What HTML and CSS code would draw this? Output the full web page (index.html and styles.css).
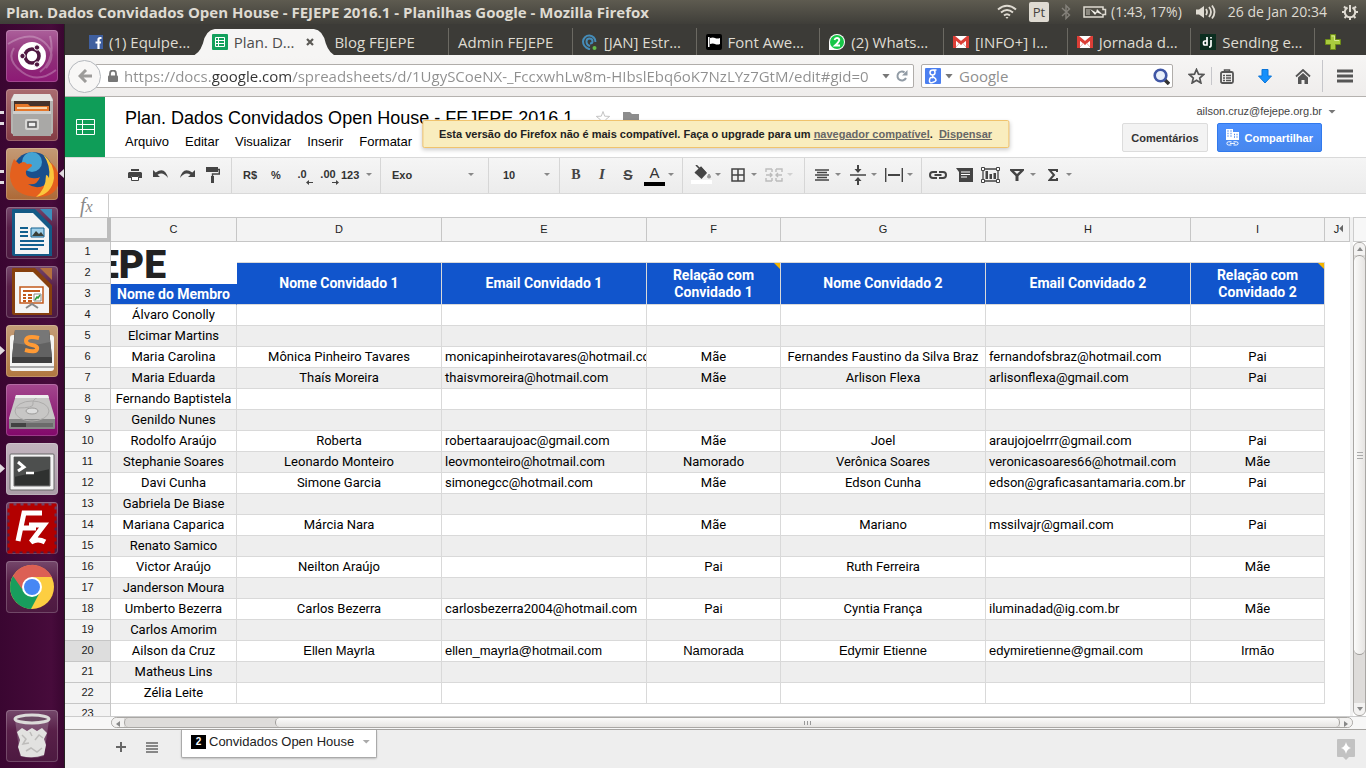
FILE: index.html
```html
<!DOCTYPE html>
<html lang="pt-BR">
<head>
<meta charset="utf-8">
<title>Plan. Dados Convidados Open House - FEJEPE 2016.1 - Planilhas Google</title>
<link rel="stylesheet" href="styles.css">
</head>
<body>
<header class="panel">
  <span class="panel-title">Plan. Dados Convidados Open House - FEJEPE 2016.1 - Planilhas Google - Mozilla Firefox</span>
  <div class="indicators">
    <svg width="20" height="16" viewBox="0 0 20 16" fill="none" stroke="#dfdbd2" stroke-width="2"><path d="M1 5.500Q10-2 19 5.500M4 8.500Q10 3.500 16 8.500M7 11.500Q10 9 13 11.500"/><path d="M8.500 13h3L10 15z" fill="#dfdbd2" stroke="none"/></svg>
    <span class="keyboard">Pt</span>
    <svg width="10" height="16" viewBox="0 0 10 16" fill="none" stroke="#85827b" stroke-width="1.400"><path d="M1 4l7.500 7L5 14.500V1.500L8.500 5 1 12"/></svg>
    <span class="indicator"><svg width="24" height="12" viewBox="0 0 24 12"><path d="M1 1h19v2.500h2.500v5H20V11H1z" fill="none" stroke="#dfdbd2" stroke-width="1.500"/><path d="M3 3h4v6H3z" fill="#8b887f"/><path d="M7 3l6 3.500L14 3l6 6-6-2.500L12 9z" fill="#f2efe8"/></svg>(1:43, 17%)</span>
    <svg width="20" height="16" viewBox="0 0 20 16" fill="none" stroke="#dfdbd2" stroke-width="1.800"><path d="M0 5.500h3L8 2v12l-5-3.500H0z" fill="#dfdbd2" stroke="none"/><path d="M10 5q2 3 0 6M13 3q4 5 0 10M16 1.500q5 6.500 0 13"/></svg>
    <span class="clock">26 de Jan 20:34</span>
    <svg width="16" height="16" viewBox="0 0 16 16" fill="none" stroke="#dfdbd2" stroke-width="2"><path d="M5.500 3.500a5.200 5.200 0 1 0 5 0M8 1v7"/><path d="M0 8h2.500M13.500 8H16M8 13.500V16M2 2.500L4 4.500M14 2.500l-2 2M2.500 14L4.500 12M13.500 14l-2-2"/></svg>
  </div>
</header>

<div class="desktop">
  <nav class="launcher" aria-label="Lançador">
    <button class="tile tile-dash" aria-label="Painel inicial"><svg viewBox="0 0 52 52"><g fill="none" stroke="#fff" stroke-opacity=".25" stroke-width="2"><path d="M2 14Q24 0 38 12T40 38M50 40Q32 54 16 42T8 18M44 6Q50 30 34 42"/></g><circle cx="26" cy="26" r="14" fill="#fff"/><circle cx="26" cy="26" r="7" fill="none" stroke="#4f1741" stroke-width="3.600"/><g fill="#4f1741" stroke="#fff"><circle cx="16.500" cy="26" r="2.700"/><circle cx="31" cy="17.500" r="2.700"/><circle cx="31" cy="34.500" r="2.700"/></g></svg></button>
    <button class="tile tile-files running" aria-label="Arquivos"><svg viewBox="0 0 52 52"><path d="M5 10L8 5h36l3 5v34l-4 3H9l-4-3z" fill="#b5b4b1"/><path d="M8 5h36l3 7H5z" fill="#e5e4e2"/><path d="M8 12h36v10H8z" fill="#46322c"/><path d="M9 15h13l2 2h19v5H9z" fill="#e5772a"/><path d="M11 18h30v2H11z" fill="#f9d6ad"/><path d="M7 22h38v25H7z" fill="#a9a8a6"/><path d="M7 22h38v3H7z" fill="#cfcecc"/><rect x="19" y="30" width="14" height="11" rx="2" fill="#d8d7d5"/><path d="M22 33h8v5h-8z" fill="#eee" stroke="#555" stroke-width="1.500"/></svg></button>
    <button class="tile tile-firefox running focused" aria-label="Firefox"><svg viewBox="0 0 52 52"><circle cx="27" cy="24" r="20" fill="#1a4f8c"/><circle cx="26" cy="14" r="10" fill="#4fb8e6" opacity=".8"/><path d="M8 11l5 5q5-4 8 0 5-1 5 2l-6 5q-1 6 6 7 5 1 8-1-3 9-12 7 8 6 17 1 9-7 5-23 8 6 9 16 0 18-20 19Q6 48 4 29q0-9 4-18z" fill="#e4601e"/><path d="M37 6q12 10 11 24-2 16-18 19 10-8 10-22 2 0 3 3 2-12-6-24z" fill="#fbc63c"/></svg></button>
    <button class="tile" aria-label="Writer"><svg viewBox="0 0 52 52"><path d="M6 3q0-1 1-1h22l17 17v30H8q-2 0-2-2z" fill="#145a86"/><path d="M9 6h18l16 16v25H9z" fill="#f4f4f4"/><path d="M34 2h12v12z" fill="#3d8fbc"/><path d="M14 21h8M14 25h8M14 29h8M14 34h24M14 38h24M14 42h18" stroke="#12608f" stroke-width="2"/><path d="M25 21h13v9H25z" fill="#9fd0ea" stroke="#12608f"/><path d="M26 29l4-5 3 3 2-2 3 4z" fill="#3a3f37"/></svg></button>
    <button class="tile" aria-label="Impress"><svg viewBox="0 0 52 52"><path d="M6 3q0-1 1-1h22l17 17v30H8q-2 0-2-2z" fill="#86400e"/><path d="M9 6h18l16 16v25H9z" fill="#f4f4f4"/><path d="M34 2h12v12z" fill="#b4703f"/><path d="M14 21h23v16H14z" fill="#fff" stroke="#c25a1c" stroke-width="1.500"/><path d="M17 25h17M17 29h3M22 29h4M17 32h3M22 32h4M17 35h3M22 35h4" stroke="#c25a1c" stroke-width="1.800"/><path d="M28 28h7v7h-7z" fill="#fff" stroke="#888"/><path d="M29 34l2-3 1 1 2-3" stroke="#2b9b3a" fill="none" stroke-width="1.500"/><path d="M20 42l6-4 6 4" fill="none" stroke="#888" stroke-width="2"/></svg></button>
    <button class="tile tile-sublime one" aria-label="Sublime Text"><svg viewBox="0 0 52 52"><rect x="4" y="10" width="44" height="36" rx="3" fill="#f4f4f2"/><path d="M4 41h44v2H4z" fill="#a9a9a9"/><path d="M9 5h34l3 28v5H6v-5z" fill="#3f3f3f"/><path d="M9 5h34l3 27H6z" fill="#626262"/><path d="M9 5h34l1 12Q26 22 8 18z" fill="#777"/><path d="M33 13q-13-3-13 3 0 3 6 4 6 1 5 4-1 4-12 1" fill="none" stroke="#ff9a35" stroke-width="4"/></svg></button>
    <button class="tile tile-disk" aria-label="Disco"><svg viewBox="0 0 52 52"><path d="M10 11h32l7 23v10H3V34z" fill="#c7c6c5"/><path d="M3 35h46v9q0 1-1 1H4q-1 0-1-1z" fill="#888"/><path d="M5 39h15v4H5z" fill="#424242"/><path d="M20 39h27v4H20z" fill="#6b6b6b"/><g fill="none" stroke="#9b9a99"><ellipse cx="26" cy="27" rx="17" ry="10" stroke="#adacab"/><ellipse cx="26" cy="27" rx="6" ry="3" fill="#ddd"/><path d="M32 13q-6 3-5 7T11 24" stroke="#adacab"/></g><path d="M10 11h32l1 3H9z" fill="#eee"/></svg></button>
    <button class="tile tile-terminal one" aria-label="Terminal"><svg viewBox="0 0 52 52"><rect x="4" y="11" width="44" height="36" rx="1" fill="#f3f3f3" stroke="#666"/><path d="M8 14h36v29H8z" fill="#2f3130" stroke="#777"/><path d="M8 14h36v12L8 34z" fill="#4d4f4e"/><path d="M12 19l6 5-6 4" fill="none" stroke="#fff" stroke-width="3"/><path d="M20 30h8" stroke="#fff" stroke-width="2.500"/></svg></button>
    <button class="tile" aria-label="FileZilla"><svg viewBox="0 0 52 52"><rect x="3.500" y="3.500" width="45" height="46" fill="#b30000" stroke="#b30000" stroke-width="4" stroke-dasharray="4 3"/><path d="M12 39L18 11h18M14 26h16M23 23h15L25 40q7-4 14 0" fill="none" stroke="#fff" stroke-width="5"/></svg></button>
    <button class="tile" aria-label="Chrome"><svg viewBox="0 0 52 52"><circle cx="26" cy="26" r="22" fill="#fdce41"/><path d="M7 15A22 22 0 0 0 25 48l9-17-8-5z" fill="#189d5d"/><path d="M7 15A22 22 0 0 1 46 16H26L16 28z" fill="#dc6054"/><circle cx="26" cy="26" r="10" fill="#fff"/><circle cx="26" cy="26" r="8" fill="#4687f4"/></svg></button>
    <button class="tile tile-trash" aria-label="Lixeira"><svg viewBox="0 0 52 52"><path d="M9 10l5 36q12 4 24 0l5-36z" fill="#d8d0d6" fill-opacity=".25"/><path d="M11 22l5-4 5 3 5-3 5 3 5-3 5 5-3 6 2 6-2 10q-11 4-23 1l-3-9 2-7z" fill="#e2e2e0"/><path d="M16 25l4 4-3 5 6-1M29 30l4-5 4 3M24 22l2 4M20 41l5-3 6 4 5-4" fill="none" stroke="#bdbcba" stroke-width="1.500"/><ellipse cx="26" cy="9" rx="17" ry="4" fill="#6b4a63" stroke="#dcdbd9" stroke-width="3"/></svg></button>
  </nav>

  <main class="browser">
    <div class="tabs" role="tablist">
      <button class="tab" role="tab"><svg width="14" height="14" viewBox="0 0 14 14"><path d="M0 0h14v14H0z" fill="#3f5f9f"/><path d="M12.500 3H11q-1.500 0-1.500 1.500V14M6.500 7.500h5.500" fill="none" stroke="#fff" stroke-width="2.200"/></svg>(1) Equipe…</button>
      <button class="tab active" role="tab" aria-selected="true"><svg class="tab-shape" viewBox="0 0 148 29" preserveAspectRatio="none"><path d="M0 29Q8 28 12 16 15 2 24 1H124Q133 2 136 16 140 28 148 29z" fill="#f6f5f4"/></svg><svg class="tab-icon" width="16" height="16" viewBox="0 0 16 16"><rect width="16" height="16" rx="1" fill="#12a05c"/><path d="M3.500 3.500h9v9h-9zM3 6.500h10M3 9.500h10M6.500 3v10" fill="none" stroke="#fff"/></svg><span class="tab-text">Plan. D…</span><svg class="tab-close" width="8" height="8" viewBox="0 0 8 8"><path d="M1 1l6 6M7 1L1 7" stroke="#5b5955" stroke-width="2.200"/></svg></button>
      <button class="tab" role="tab">Blog FEJEPE</button>
      <button class="tab" role="tab">Admin FEJEPE</button>
      <button class="tab" role="tab"><svg width="16" height="16" viewBox="0 0 16 16"><path d="M8 15.500Q1 13 1 7.500A6.200 6.200 0 0 1 13.400 8M8 12Q4.500 11 4.500 7.500a3 3 0 0 1 6 0q0 2-2.500 2" fill="none" stroke="#458cb8" stroke-width="2"/><circle cx="12.500" cy="14" r="2" fill="#63bb4a"/></svg>[JAN] Estr…</button>
      <button class="tab" role="tab"><svg width="16" height="16" viewBox="0 0 16 16"><rect width="16" height="16" rx="2" fill="#000"/><path d="M2 3h1.500v10H2zM4 4q3-1 5 0t5 0v6q-3 1-5 0t-5 0z" fill="#fff"/></svg>Font Awe…</button>
      <button class="tab" role="tab"><svg width="16" height="16" viewBox="0 0 16 16"><path d="M0 16V8a8 8 0 1 1 8 8z" fill="#fff"/><circle cx="8" cy="8" r="7" fill="#16c646"/><path d="M5.500 6q.5-2 2.500-2t2.300 2Q10 8 6 11.500h5" fill="none" stroke="#fff" stroke-width="1.800"/></svg>(2) Whats…</button>
      <button class="tab" role="tab"><svg width="16" height="12" viewBox="0 0 16 12"><path d="M0 0h16v12H0z" fill="#fff"/><path d="M1.500 12V1.500L8 7l6.500-5.500V12" fill="none" stroke="#dc3e36" stroke-width="3"/><path d="M3 11l3.500-4M13 11L9.500 7" stroke="#e9aaa6"/></svg>[INFO+] I…</button>
      <button class="tab" role="tab"><svg width="16" height="12" viewBox="0 0 16 12"><path d="M0 0h16v12H0z" fill="#fff"/><path d="M1.500 12V1.500L8 7l6.500-5.500V12" fill="none" stroke="#dc3e36" stroke-width="3"/><path d="M3 11l3.500-4M13 11L9.500 7" stroke="#e9aaa6"/></svg>Jornada d…</button>
      <button class="tab" role="tab"><svg width="16" height="16" viewBox="0 0 16 16"><path d="M0 0h16v16H0z" fill="#0c2e20"/><path d="M7 3v8H5q-1.500 0-1.500-2T5 7h2M11 6v5.500q0 1.500-2 1.500M11 3v1.500" fill="none" stroke="#fff" stroke-width="1.700"/></svg>Sending e…</button>
      <button class="new-tab" aria-label="Nova aba"><svg width="16" height="16" viewBox="0 0 16 16"><path d="M5.500.5h5v5h5v5h-5v5h-5v-5h-5v-5h5z" fill="#a9cb3e" stroke="#6d8b17"/><path d="M6.500 2h3v4.500H14" fill="none" stroke="#d7e994"/></svg></button>
    </div>

    <div class="navbar">
      <button class="back" aria-label="Voltar"><svg width="14" height="14" viewBox="0 0 14 14" fill="none" stroke="#9d9c9a" stroke-width="3"><path d="M8 1L2 7l6 6M2 7h12"/></svg></button>
      <div class="urlbar">
        <svg width="10" height="12" viewBox="0 0 10 12"><path d="M2 6V3.500a3 3 0 0 1 6 0V6" fill="none" stroke="#777" stroke-width="1.800"/><rect y="5.500" width="10" height="6.500" rx="1" fill="#777"/></svg>
        <input class="url" type="text" aria-label="Endereço" value="https://docs.google.com/spreadsheets/d/1UgySCoeNX-_FccxwhLw8m-HIbslEbq6oK7NzLYz7GtM/edit#gid=0">
        <span class="caret big"></span>
        <button class="plain" aria-label="Recarregar"><svg width="12" height="12" viewBox="0 0 12 12"><path d="M10 8A4.500 4.500 0 1 1 8.500 2.300" fill="none" stroke="#919ba5" stroke-width="2"/><path d="M11.500 0v5.500H6z" fill="#919ba5"/></svg></button>
      </div>
      <div class="searchbar">
        <svg width="16" height="16" viewBox="0 0 16 16"><rect width="16" height="16" rx="1" fill="#4b7ff0"/><path d="M11.500 2H8Q5 2 5 4.500T7.500 7 10 4.500 8 2M8 7.500Q7 8.500 9 9.500t2 2.500-3.500 2.500T4.500 12 8 9.800" fill="none" stroke="#fff" stroke-width="1.500"/></svg>
        <span class="caret big"></span>
        <input class="search" type="text" aria-label="Pesquisar" placeholder="Google">
        <button class="plain" aria-label="Buscar"><svg width="17" height="17" viewBox="0 0 17 17"><path d="M11 11l5 5" stroke="#333" stroke-width="3.500"/><circle cx="7.500" cy="7.500" r="5.800" fill="#e8effa" stroke="#3f56a5" stroke-width="2.600"/></svg></button>
      </div>
      <div class="nav-icons">
        <button class="plain" aria-label="Favoritar"><svg width="17" height="16" viewBox="0 0 17 16"><path d="M8.500 1.500l2 4.700 5 .4-3.800 3.400 1.200 5-4.400-2.700L4.100 15l1.200-5L1.500 6.600l5-.4z" fill="none" stroke="#555" stroke-width="1.700"/></svg></button>
        <i class="rule"></i>
        <button class="plain" aria-label="Lista de favoritos"><svg width="14" height="15" viewBox="0 0 14 15"><rect x="1" y="3" width="12" height="11" rx="1.500" fill="none" stroke="#555" stroke-width="1.800"/><path d="M4.500 2.500V1h5v1.500M3 6.500h2M6 6.500h5M3 9h2M6 9h5M3 11.500h2M6 11.500h5" fill="none" stroke="#555" stroke-width="1.500"/></svg></button>
        <button class="plain" aria-label="Downloads"><svg width="14" height="15" viewBox="0 0 14 15"><path d="M4 .5h6V7h3.500L7 14 .5 7H4z" fill="#1590fb" stroke="#0b75d8"/></svg></button>
        <button class="plain" aria-label="Página inicial"><svg width="16" height="15" viewBox="0 0 16 15"><path d="M1 7.500L8 1l7 6.500" fill="none" stroke="#555" stroke-width="1.800"/><path d="M3 8.500L8 4l5 4.500V15H9.500v-4h-3v4H3z" fill="#555"/></svg></button>
        <i class="rule tall"></i>
        <button class="plain" aria-label="Menu"><svg width="16" height="14" viewBox="0 0 16 14"><path d="M0 2h16M0 7h16M0 12h16" stroke="#555" stroke-width="3"/></svg></button>
      </div>
    </div>

    <section class="docs-head">
      <a class="sheets-home" href="#" aria-label="Página inicial do Planilhas"><svg width="19" height="16" viewBox="0 0 19 16"><path d="M.5.500h18v15H.5zM0 5.500h19M0 10.500h19M6.500 0v16" fill="none" stroke="#fff"/></svg></a>
      <div class="doc-info">
        <div class="title-row"><h1>Plan. Dados Convidados Open House - FEJEPE 2016.1</h1>
          <svg width="16" height="16" viewBox="0 0 16 16"><path d="M8 1.500l1.700 4.700 5 .2-3.900 3.100 1.400 4.900L8 11.600l-4.200 2.800 1.400-4.900L1.300 6.400l5-.2z" fill="none" stroke="#c4c4c4"/></svg>
          <svg width="16" height="14" viewBox="0 0 16 14"><path d="M0 1h7l2 2h7v11H0z" fill="#8d8d8d"/></svg></div>
        <nav class="menus"><button>Arquivo</button><button>Editar</button><button>Visualizar</button><button>Inserir</button><button>Formatar</button></nav>
      </div>
      <div class="account">
        <button class="email">ailson.cruz@fejepe.org.br<span class="caret mid"></span></button>
        <div class="actions"><button class="comments">Comentários</button><button class="share"><svg width="13" height="17" viewBox="0 0 13 17"><path d="M0 0h7v3h6v8H0z" fill="#fff"/><path d="M1.500 2h1M4.500 2h1M1.500 4.500h1M4.500 4.500h1M1.500 7h1M4.500 7h1M8 5.500h1M10.500 5.500h1M8 8h1M10.500 8h1" stroke="#4a87ee" stroke-width="1.300"/><path d="M5.500 12.800h-3a1.600 1.600 0 0 0 0 3.200h3M7.500 12.800h3a1.600 1.600 0 0 1 0 3.200h-3M4 14.400h5" fill="none" stroke="#fff"/></svg>Compartilhar</button></div>
      </div>
      <div class="notice" role="alert">Esta versão do Firefox não é mais compatível. Faça o upgrade para um <a href="#">navegador compatível</a>. <a class="dismiss" href="#">Dispensar</a></div>
    </section>

    <div class="toolbar" role="toolbar">
      <div class="group first">
        <button class="tool" aria-label="Imprimir"><svg width="14" height="12" viewBox="0 0 14 12"><path d="M3 0h8v2H3zM1 3h12l1 1v5h-3V7H3v2H0V4z" fill="#444"/><path d="M3.500 7.500h7v4h-7z" fill="#fff" stroke="#444"/></svg></button>
        <button class="tool" aria-label="Desfazer"><svg width="16" height="9" viewBox="0 0 16 9"><path d="M0 0v7h7L4.500 4.700Q10 1 15 8 12-4 2.700 2.500z" fill="#444"/></svg></button>
        <button class="tool" aria-label="Refazer"><svg width="16" height="9" viewBox="0 0 16 9"><path d="M16 0v7H9l2.500-2.300Q6 1 1 8 4-4 13.300 2.500z" fill="#444"/></svg></button>
        <button class="tool" aria-label="Pintar formatação"><svg width="14" height="16" viewBox="0 0 14 16"><path d="M0 0h12v5H0z" fill="#444"/><path d="M12 2.500h1.300V7H6.500v3" fill="none" stroke="#444" stroke-width="1.400"/><path d="M5 9h3v7H5z" fill="#444"/></svg></button>
      </div>
      <div class="group num">
        <button class="tool">R$</button>
        <button class="tool">%</button>
        <button class="tool dec">.0<svg width="7" height="5" viewBox="0 0 7 5"><path d="M0 2.500L3 0v2h4v1H3v2z" fill="#444"/></svg></button>
        <button class="tool dec">.00<svg width="7" height="5" viewBox="0 0 7 5"><path d="M7 2.500L4 0v2H0v1h4v2z" fill="#444"/></svg></button>
        <button class="tool drop digits">123<span class="caret"></span></button>
      </div>
      <label class="group picker font"><select aria-label="Fonte"><option>Exo</option></select><span class="caret"></span></label>
      <label class="group picker size"><select aria-label="Tamanho da fonte"><option>10</option></select><span class="caret"></span></label>
      <div class="group">
        <button class="tool bold">B</button>
        <button class="tool ital">I</button>
        <button class="tool strike">S</button>
        <button class="tool drop"><span class="ink">A</span><span class="caret"></span></button>
      </div>
      <div class="group fills">
        <button class="tool drop" aria-label="Cor de preenchimento"><span class="bucket"><svg width="18" height="15" viewBox="0 0 18 15"><path d="M2 8l6-6 6 6-5.500 6z" fill="#444"/><path d="M2 8l6-5.500L13 8M3 0l5 5" fill="none" stroke="#444" stroke-width="1.600"/><path d="M16 9q-3 4 0 4t0-4z" fill="#999" stroke="#999"/></svg></span><span class="caret"></span></button>
        <button class="tool drop" aria-label="Bordas"><svg width="14" height="14" viewBox="0 0 14 14"><path d="M1 1h12v12H1zM7 1v12M1 7h12" fill="none" stroke="#444" stroke-width="1.500"/></svg><span class="caret"></span></button>
        <button class="tool drop off" aria-label="Mesclar" disabled><svg width="18" height="14" viewBox="0 0 18 14" fill="none" stroke="#444" stroke-width="1.400"><path d="M7 1H1v3M1 10v3h6M11 1h6v3M17 10v3h-6M7 1v3M7 10v3M11 1v3M11 10v3M1 7h6M17 7h-6M5 5l2 2-2 2M13 5l-2 2 2 2"/></svg><span class="caret"></span></button>
      </div>
      <div class="group">
        <button class="tool drop" aria-label="Alinhamento horizontal"><svg width="14" height="12" viewBox="0 0 14 12"><path d="M0 1h14M2 3.500h10M0 6h14M2 8.500h10M0 11h14" stroke="#444" stroke-width="1.300"/></svg><span class="caret"></span></button>
        <button class="tool drop" aria-label="Alinhamento vertical"><svg width="16" height="20" viewBox="0 0 16 20"><path d="M0 10h16" stroke="#444" stroke-width="1.500"/><path d="M7 0h2v4h2.500L8 8 4.500 4H7zM7 20h2v-4h2.500L8 12l-3.500 4H7z" fill="#444"/></svg><span class="caret"></span></button>
        <button class="tool drop" aria-label="Quebra de texto"><svg width="18" height="14" viewBox="0 0 18 14"><path d="M.7 0v14M17.300 0v14" stroke="#444" stroke-width="1.400"/><path d="M3 7h12" stroke="#444" stroke-width="2"/></svg><span class="caret"></span></button>
      </div>
      <div class="group last">
        <button class="tool" aria-label="Link"><svg width="18" height="8" viewBox="0 0 18 8" fill="none" stroke="#444" stroke-width="2"><path d="M8 1H4a3 3 0 0 0 0 6h4M10 1h4a3 3 0 0 1 0 6h-4M5.500 4h7"/></svg></button>
        <button class="tool" aria-label="Comentário"><svg width="17" height="14" viewBox="0 0 17 14"><path d="M0 0h17v14H3V4z" fill="#444"/><path d="M5 4h9M5 6.500h9M5 9h6" stroke="#fff"/></svg></button>
        <button class="tool" aria-label="Gráfico"><svg width="19" height="16" viewBox="0 0 19 16"><path d="M2 2h15v12H2z" fill="none" stroke="#444" stroke-width="1.300"/><path d="M4.500 4h2.500v8H4.500zM8.500 7H11v5H8.500zM12.500 6H15v6h-2.500z" fill="#444"/><path d="M.5.500h3v3h-3zM15.500.500h3v3h-3zM.5 12.500h3v3h-3zM15.500 12.500h3v3h-3z" fill="#fff" stroke="#444"/></svg></button>
        <button class="tool drop" aria-label="Filtro"><svg width="14" height="12" viewBox="0 0 14 12"><path d="M0 0h14v1.500L8.500 7v5h-3V7L0 1.500z" fill="#444"/><path d="M4 2h6L7 5z" fill="#f1f1f1"/></svg><span class="caret"></span></button>
        <button class="tool drop" aria-label="Funções"><svg width="10" height="12" viewBox="0 0 10 12"><path d="M9 3V1H1.500L6 6l-4.500 5H9V9" fill="none" stroke="#444" stroke-width="2"/></svg><span class="caret"></span></button>
      </div>
    </div>

    <div class="formula"><label for="fx">f<small>x</small></label><input id="fx" type="text"></div>

    <div class="sheet-area">
      <div class="grid-view">
        <table class="grid">
          <colgroup><col class="w-num"><col class="w-member"><col class="w-wide"><col class="w-wide"><col class="w-rel"><col class="w-wide"><col class="w-wide"><col class="w-rel"><col class="w-tail"></colgroup>
          <thead><tr><th class="corner"></th><th>C</th><th>D</th><th>E</th><th>F</th><th>G</th><th>H</th><th>I</th><th class="j">J<span class="hidden-cols"></span></th></tr></thead>
          <tbody>
          <tr class="top"><th>1</th><td rowspan="2" class="logo"><span>EPE</span></td><td></td><td></td><td></td><td></td><td></td><td></td><td class="out"></td></tr>
          <tr class="head"><th>2</th><td rowspan="2">Nome Convidado 1</td><td rowspan="2">Email Convidado 1</td><td rowspan="2" class="note">Relação com Convidado 1</td><td rowspan="2">Nome Convidado 2</td><td rowspan="2">Email Convidado 2</td><td rowspan="2" class="note">Relação com Convidado 2</td><td class="out"></td></tr>
          <tr class="head"><th>3</th><td class="member">Nome do Membro</td><td class="out"></td></tr>
          <tr><th>4</th><td>Álvaro Conolly</td><td></td><td></td><td></td><td></td><td></td><td></td><td></td></tr>
          <tr><th>5</th><td>Elcimar Martins</td><td></td><td></td><td></td><td></td><td></td><td></td><td></td></tr>
          <tr><th>6</th><td>Maria Carolina</td><td>Mônica Pinheiro Tavares</td><td>monicapinheirotavares@hotmail.com</td><td>Mãe</td><td>Fernandes Faustino da Silva Braz</td><td>fernandofsbraz@hotmail.com</td><td>Pai</td><td></td></tr>
          <tr><th>7</th><td>Maria Eduarda</td><td>Thaís Moreira</td><td>thaisvmoreira@hotmail.com</td><td>Mãe</td><td>Arlison Flexa</td><td>arlisonflexa@gmail.com</td><td>Pai</td><td></td></tr>
          <tr><th>8</th><td>Fernando Baptistela</td><td></td><td></td><td></td><td></td><td></td><td></td><td></td></tr>
          <tr><th>9</th><td>Genildo Nunes</td><td></td><td></td><td></td><td></td><td></td><td></td><td></td></tr>
          <tr><th>10</th><td>Rodolfo Araújo</td><td>Roberta</td><td>robertaaraujoac@gmail.com</td><td>Mãe</td><td>Joel</td><td>araujojoelrrr@gmail.com</td><td>Pai</td><td></td></tr>
          <tr><th>11</th><td>Stephanie Soares</td><td>Leonardo Monteiro</td><td>leovmonteiro@hotmail.com</td><td>Namorado</td><td>Verônica Soares</td><td>veronicasoares66@hotmail.com</td><td>Mãe</td><td></td></tr>
          <tr><th>12</th><td>Davi Cunha</td><td>Simone Garcia</td><td>simonegcc@hotmail.com</td><td>Mãe</td><td>Edson Cunha</td><td>edson@graficasantamaria.com.br</td><td>Pai</td><td></td></tr>
          <tr><th>13</th><td>Gabriela De Biase</td><td></td><td></td><td></td><td></td><td></td><td></td><td></td></tr>
          <tr><th>14</th><td>Mariana Caparica</td><td>Márcia Nara</td><td></td><td>Mãe</td><td>Mariano</td><td>mssilvajr@gmail.com</td><td>Pai</td><td></td></tr>
          <tr><th>15</th><td>Renato Samico</td><td></td><td></td><td></td><td></td><td></td><td></td><td></td></tr>
          <tr><th>16</th><td>Victor Araújo</td><td>Neilton Araújo</td><td></td><td>Pai</td><td>Ruth Ferreira</td><td></td><td>Mãe</td><td></td></tr>
          <tr><th>17</th><td>Janderson Moura</td><td></td><td></td><td></td><td></td><td></td><td></td><td></td></tr>
          <tr><th>18</th><td>Umberto Bezerra</td><td>Carlos Bezerra</td><td>carlosbezerra2004@hotmail.com</td><td>Pai</td><td>Cyntia França</td><td>iluminadad@ig.com.br</td><td>Mãe</td><td></td></tr>
          <tr><th>19</th><td>Carlos Amorim</td><td></td><td></td><td></td><td></td><td></td><td></td><td></td></tr>
          <tr class="current"><th>20</th><td>Ailson da Cruz</td><td>Ellen Mayrla</td><td>ellen_mayrla@hotmail.com</td><td>Namorada</td><td>Edymir Etienne</td><td>edymiretienne@gmail.com</td><td>Irmão</td><td></td></tr>
          <tr><th>21</th><td>Matheus Lins</td><td></td><td></td><td></td><td></td><td></td><td></td><td></td></tr>
          <tr><th>22</th><td>Zélia Leite</td><td></td><td></td><td></td><td></td><td></td><td></td><td></td></tr>
          <tr class="blank"><th>23</th><td></td><td></td><td></td><td></td><td></td><td></td><td></td><td></td></tr>
          </tbody>
        </table>
      </div>
      <div class="vscroll"><div class="vcap"></div><div class="vtrack"><span class="arrow up"></span><div class="vthumb"><i></i></div><div class="vrest"></div><span class="arrow down"></span></div></div>
    </div>
    <div class="hscroll"><div class="htrack"><span class="arrow left"></span><div class="hrest"></div><div class="hthumb"><i></i></div><span class="arrow right"></span></div></div>

    <footer class="sheet-tabs">
      <button class="plain" aria-label="Adicionar página"><svg width="10" height="10" viewBox="0 0 10 10"><path d="M5 0v10M0 5h10" stroke="#666" stroke-width="2"/></svg></button>
      <button class="plain" aria-label="Todas as páginas"><svg width="12" height="11" viewBox="0 0 12 11"><path d="M0 1h12M0 4h12M0 7h12M0 10h12" stroke="#666" stroke-width="1.700"/></svg></button>
      <button class="sheet-tab"><span class="count">2</span>Convidados Open House<span class="caret mid"></span></button>
      <button class="plain explore" aria-label="Explorar"><svg width="18" height="21" viewBox="0 0 18 21"><path d="M1 0h16q1 0 1 1v16q0 1-1 1h-5l-3 3-3-3H1q-1 0-1-1V1q0-1 1-1z" fill="#c2c2c2"/><path d="M9 3q1 5 5 6-4 1-5 6-1-5-5-6 4-1 5-6z" fill="#fff"/></svg></button>
    </footer>
  </main>
</div>
</body>
</html>
```
FILE: styles.css
```css
* { box-sizing: border-box; }
body { margin: 0; height: 100vh; display: flex; flex-direction: column; overflow: hidden; font: 13px "Liberation Sans", Arial, sans-serif; background: #fff; color: #000; }
button { border: 0; margin: 0; padding: 0; background: none; font: inherit; color: inherit; }
input, select { border: 0; margin: 0; padding: 0; background: none; font: inherit; outline: 0; min-width: 0; }
svg { flex: none; display: block; }

.caret { flex: none; width: 6px; height: 3px; background: #888; clip-path: polygon(0 0, 100% 0, 50% 100%); }
.caret.mid { width: 8px; height: 4px; }
.caret.big { width: 8px; height: 5px; background: #777; }

/* Desktop panel */
.panel { flex: none; height: 24px; display: flex; align-items: center; justify-content: space-between; padding: 0 8px 0 6px; background: linear-gradient(#5e5b50, #3f3e39); color: #dfdbd2; font: 14px/22px "Open Sans", sans-serif; white-space: nowrap; }
.panel-title { font-weight: 700; font-size: 15px; }
.indicators { display: flex; align-items: center; gap: 12px; }
.indicator { display: flex; align-items: center; gap: 4px; margin-right: 2px; }
.clock { margin-right: 3px; }
.keyboard { width: 20px; height: 20px; border-radius: 2px; background: #dfdbd2; color: #45433e; line-height: 20px; text-align: center; font-size: 13px; }

.desktop { flex: 1; min-height: 0; display: flex; }
.launcher { flex: none; width: 65px; display: flex; flex-direction: column; gap: 7px; padding: 6px 6px 6px; border-right: 1px solid #262222; background: linear-gradient(90deg, #3a0631, #470b3b 80%, #3a0631); }
.tile { position: relative; flex: none; width: 52px; height: 52px; border-radius: 4px; background: linear-gradient(#75486b, #592049 40%, #4d1a41); box-shadow: inset 0 0 0 1px rgba(255,255,255,.2); }
.tile svg { width: 52px; height: 52px; }
.tile-dash { background: linear-gradient(#ac609b, #8f3079 50%, #8d1975); }
.tile-files { background: linear-gradient(#a96c70, #843b44); }
.tile-firefox { background: linear-gradient(#c49a75, #ad6937); }
.tile-sublime { background: linear-gradient(#c49d78, #b17740); }
.tile-disk { background: linear-gradient(#a3478d, #82086a); }
.tile-terminal { background: linear-gradient(#c2b4be, #aa9ca7); }
.tile-trash { margin-top: auto; }
.running::before { content: ""; position: absolute; left: -6px; top: 22px; width: 4px; height: 8px; border: solid #e2dbe0; border-width: 3px 0; }
.one::before, .focused::after { content: ""; position: absolute; top: 21px; width: 5px; height: 9px; background: #e2dbe0; }
.one::before { left: -6px; clip-path: polygon(0 0, 100% 50%, 0 100%); }
.focused::after { right: -6px; clip-path: polygon(100% 0, 0 50%, 100% 100%); }

.browser { flex: 1; min-width: 0; display: flex; flex-direction: column; }

/* Browser tabs */
.tabs { flex: none; height: 32px; display: flex; padding: 4px 15px 0 15px; background: #3c3b37; border-bottom: 1px solid #f6f5f4; color: #dfdbd2; font: 15px "Open Sans", sans-serif; }
.tab { position: relative; flex: 1 1 0; min-width: 0; display: flex; align-items: center; gap: 6px; padding: 0 0 0 9px; white-space: nowrap; border-right: 1px solid #6b6962; }
.tab:first-child { border-right: 0; }
.tab.active { border: 0; color: #4c4c4c; z-index: 1; }
.tab-shape { position: absolute; left: -12px; top: 0; width: calc(100% + 24px); height: 28px; }
.tab-icon, .tab-text, .tab-close { position: relative; }
.tab-close { margin-left: auto; margin-right: 11px; }
.new-tab { flex: none; width: 36px; padding-left: 10px; }

/* Browser navigation */
.navbar { flex: none; height: 41px; display: flex; align-items: center; padding: 0 13px 0 3px; background: linear-gradient(#f6f5f4, #efedec); border-bottom: 1px solid #b5b2af; font: 15px "Open Sans", sans-serif; }
.plain { flex: none; display: flex; align-items: center; justify-content: center; }
.back { position: relative; z-index: 1; flex: none; width: 33px; height: 33px; display: grid; place-items: center; border: 1px solid #b4b8bd; border-radius: 50%; background: #f8f7f6; }
.urlbar, .searchbar { display: flex; align-items: center; height: 24px; background: #fff; border: 1px solid #b0adaa; border-radius: 2px; }
.urlbar { flex: 1; min-width: 0; margin-left: -6px; padding: 0 5px 0 12px; gap: 6px; }
.url { flex: 1; height: 22px; color: #8f8f8f; -webkit-text-fill-color: transparent; background: linear-gradient(90deg, #8f8f8f 88px, #333 88px 168px, #8f8f8f 168px); -webkit-background-clip: text; background-clip: text; }
.searchbar { flex: none; width: 252px; margin-left: 7px; padding: 0 2px 0 3px; gap: 4px; }
.search { flex: 1; height: 22px; padding-left: 2px; }
.search::placeholder { color: #8f8f8f; opacity: 1; }
.nav-icons { flex: none; display: flex; align-items: center; margin-left: 13px; }
.nav-icons .plain { width: 20px; margin-right: 18px; }
.nav-icons .plain:first-child { margin-right: 5px; }
.nav-icons .plain:last-child { width: 17px; margin: 0 0 0 13px; }
.rule { width: 1px; height: 18px; background: #c6c6ca; margin-right: 5px; }
.rule.tall { height: 32px; margin: 0 0 0 -9px; }

/* Document header */
.docs-head { position: relative; flex: none; height: 60px; display: flex; }
.sheets-home { flex: none; width: 40px; display: grid; place-items: center; background: #0f9d58; }
.doc-info { flex: 1; min-width: 0; padding: 10px 0 0 20px; white-space: nowrap; }
.title-row { display: flex; align-items: center; gap: 12px; height: 22px; }
.title-row svg:nth-of-type(1) { margin-left: 10px; }
h1 { margin: 0; font-size: 18px; font-weight: 400; }
.menus { display: flex; gap: 16px; margin-top: 4px; line-height: 17px; }
.account { flex: none; display: flex; flex-direction: column; align-items: flex-end; gap: 5px; padding: 8px 30px 0 0; }
.email { display: flex; align-items: center; gap: 6px; font-size: 11px; line-height: 13px; color: #444; }
.email .caret { background: #777; }
.actions { display: flex; gap: 9px; padding-right: 14px; }
.actions button { height: 29px; border-radius: 2px; font-size: 11px; font-weight: 700; }
.comments { padding: 0 8px; border: 1px solid #dcdcdc; background: #f3f3f3; color: #333; }
.share { display: flex; align-items: center; gap: 6px; padding: 0 8px; border: 1px solid #3079ed; background: linear-gradient(#4d90fe, #4787ed); color: #fff; }
.notice { position: absolute; z-index: 2; top: 23px; left: 50%; transform: translateX(-50%); padding: 0 16px; border: 1px solid #f0c36d; border-radius: 2px; background: #f9edbe; box-shadow: 0 2px 4px rgba(0,0,0,.2); color: #222; font-size: 11px; font-weight: 700; line-height: 26px; white-space: nowrap; }
.notice a { color: #666; }
.dismiss { margin-left: 3px; }

/* Toolbar */
.toolbar { flex: none; height: 37px; display: flex; padding-left: 57px; border: solid #d9d9d9; border-width: 1px 0; background: linear-gradient(#f5f5f5, #ececec); color: #333; font-size: 11px; font-weight: 700; }
.group { flex: none; display: flex; align-items: center; padding: 0 5px 2px 3px; border-right: 1px solid #d6d6d6; }
.first { padding-left: 0; }
.num { padding: 0 3px 2px 5px; }
.fills { padding: 0 8px 2px 5px; }
.last { border-right: 0; }
.tool { position: relative; flex: none; width: 26px; height: 26px; display: flex; align-items: center; justify-content: center; }
.drop { width: 36px; gap: 3px; justify-content: space-between; padding: 0 3px; }
.drop svg, .drop .ink { margin: 0 auto; }
.digits { padding: 0 5px 0 0; }
.off { opacity: .3; }
.dec { align-items: flex-start; padding-top: 6px; }
.dec svg { position: absolute; right: 2px; bottom: 3px; }
.picker { justify-content: space-between; }
.picker select { appearance: none; color: #333; }
.font { width: 108px; padding: 0 14px 2px 11px; }
.size { width: 71px; padding: 0 9px 2px 14px; }
.bold, .ital, .strike { font: 700 14px "Liberation Serif", serif; color: #444; }
.ital { font-style: italic; font-size: 15px; }
.strike { font-family: "Liberation Sans", sans-serif; text-decoration: line-through; }
.ink { width: 21px; border-bottom: 4px solid #000; font-size: 15px; font-weight: 400; line-height: 18px; text-align: center; }
.bucket { width: 21px; border-bottom: 4px solid #fff; }

.formula { flex: none; height: 23px; display: flex; }
.formula label { width: 44px; padding-left: 15px; border-right: 1px solid #ccc; font: italic 20px/22px "Liberation Serif", serif; color: #888; }
.formula small { font-size: 16px; }
.formula input { flex: 1; }

/* Spreadsheet */
.sheet-area { flex: 1; min-height: 0; display: flex; }
.grid-view { flex: 1; min-width: 0; overflow: hidden; border-right: 3px solid #f1f1f1; }
.grid { width: 1285px; table-layout: fixed; border-collapse: separate; border-spacing: 0; }
.w-num { width: 46px; }
.w-member { width: 126px; }
.w-wide { width: 205px; }
.w-rel { width: 134px; }
.w-tail { width: 25px; }
.grid th { height: 21px; padding: 0 0 2px; border: solid #c6c6c6; border-width: 0 1px 1px 0; background: #f3f3f3; font-size: 11px; font-weight: 400; line-height: 16px; color: #222; }
.grid thead th { height: 25px; border-top-width: 1px; }
.grid .corner { border-right: 4px solid #bcbcbc; border-bottom: 4px solid #bcbcbc; }
.grid .j { padding-left: 3px; white-space: nowrap; }
.hidden-cols { display: inline-block; width: 4px; height: 8px; background: #666; clip-path: polygon(100% 0, 0 50%, 100% 100%); }
.grid td { height: 21px; padding: 0 3px; border: solid #d9d9d9; border-width: 0 1px 1px 0; overflow: hidden; white-space: nowrap; text-align: center; font: 13px/20px Roboto, sans-serif; }
.grid td:nth-child(4), .grid td:nth-child(7) { text-align: left; }
.grid tr:nth-child(odd) td { background: #eee; }
.grid tr:nth-child(even) td, .grid tr.top td, .grid tr.blank td { background: #fff; }
.grid tr td:nth-child(9), .grid tr.head .out, .grid tr.top .out { border: 0; background: #fff; }
.grid tr.blank td { border: 0; }
.grid .top td { border-right: 0; }
.grid tr.head td:not(.out) { background: #15c; color: #fff; font: 700 14px/17px Roboto, sans-serif; text-align: center; white-space: normal; padding: 0 20px; }
.grid tr.head td.member:not(.out) { padding: 0; white-space: nowrap; border-right-color: #15c; }
.grid .top .logo { padding: 0; border-right: 0; border-bottom-color: #fff; vertical-align: top; }
.logo span { width: 55px; height: 40px; display: flex; justify-content: flex-end; overflow: hidden; color: #222; font: 900 39px/46px Roboto, sans-serif; }
.grid .note { position: relative; }
.note::after { content: ""; position: absolute; top: 0; right: 0; width: 6px; height: 6px; background: #f4b400; clip-path: polygon(0 0, 100% 0, 100% 100%); }
.grid .current th { background: #ddd; }
.grid .current td:nth-child(n+3) { font-family: "Liberation Sans", sans-serif; }

/* Scroll bars */
.vscroll { flex: none; width: 13px; display: flex; flex-direction: column; }
.vcap { flex: none; height: 25px; border: solid #ccc; border-width: 1px 0 1px 1px; background: #f7f7f7; }
.vtrack { flex: 1; display: flex; flex-direction: column; border: 1px solid #a9a7a4; border-radius: 6px; background: #dedcda; overflow: hidden; }
.arrow { flex: none; width: 12px; height: 12px; background: #f3f2f1; display: grid; place-items: center; }
.arrow::after { content: ""; width: 6px; height: 4px; background: #888; clip-path: polygon(50% 0, 100% 100%, 0 100%); }
.down::after { clip-path: polygon(0 0, 100% 0, 50% 100%); }
.left::after { width: 4px; height: 6px; clip-path: polygon(100% 0, 0 50%, 100% 100%); }
.right::after { width: 4px; height: 6px; clip-path: polygon(0 0, 100% 50%, 0 100%); }
.vthumb { flex: 401; display: grid; place-items: center; border: solid #a09e9b; border-width: 1px 0; border-radius: 6px; background: linear-gradient(90deg, #fbfbfa, #e6e4e2); }
.vthumb i { width: 6px; height: 7px; background: repeating-linear-gradient(#aaa 0 1px, transparent 1px 3px); }
.vrest { flex: 48; }
.hscroll { flex: none; height: 14px; display: flex; padding: 0 13px 1px 46px; border-top: 1px solid #ccc; border-bottom: 1px solid #a5a3a0; background: #f7f7f7; }
.htrack { flex: 1; display: flex; border: 1px solid #a9a7a4; border-radius: 6px; background: #dedcda; overflow: hidden; }
.hrest { flex: 151; border-left: 1px solid #a9a7a4; border-radius: 6px; }
.hthumb { flex: 1067; display: grid; place-items: center; border: solid #a09e9b; border-width: 0 1px; border-radius: 6px; background: linear-gradient(#fbfbfa, #e6e4e2); }
.hthumb i { width: 7px; height: 4px; background: repeating-linear-gradient(90deg, #999 0 1px, transparent 1px 3px); }

/* Sheet tabs */
.sheet-tabs { flex: none; height: 38px; display: flex; align-items: flex-start; padding: 0 11px 0 50px; background: #eee; }
.sheet-tabs .plain { height: 34px; width: 12px; margin-right: 19px; }
.sheet-tab { display: flex; align-items: center; height: 28px; margin-left: 4px; padding: 0 6px 4px 9px; gap: 3px; border: solid #aaa; border-width: 0 1px 1px; border-radius: 0 0 2px 2px; background: #fff; box-shadow: 0 1px 2px rgba(0,0,0,.2); color: #222; }
.sheet-tab .caret { margin-left: 5px; background: #aaa; }
.count { width: 15px; height: 14px; background: #000; color: #fff; font-size: 10px; font-weight: 700; line-height: 14px; text-align: center; }
.sheet-tabs .explore { width: 18px; height: 38px; margin: 0 0 0 auto; }
```
